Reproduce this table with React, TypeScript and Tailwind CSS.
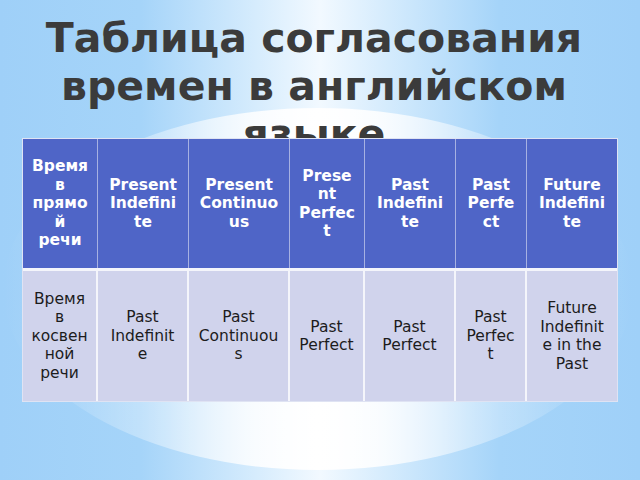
const cols = ["w-[75px]", "w-[91px]", "w-[101px]", "w-[75px]", "w-[91px]", "w-[71px]", "w-[90px]"];

const head: string[][] = [
  ["Время", "в", "прямо", "й", "речи"],
  ["Present", "Indefini", "te"],
  ["Present", "Continuo", "us"],
  ["Prese", "nt", "Perfec", "t"],
  ["Past", "Indefini", "te"],
  ["Past", "Perfe", "ct"],
  ["Future", "Indefini", "te"],
];

const body: string[][] = [
  ["Время", "в", "косвен", "ной", "речи"],
  ["Past", "Indefinit", "e"],
  ["Past", "Continuou", "s"],
  ["Past", "Perfect"],
  ["Past", "Perfect"],
  ["Past", "Perfec", "t"],
  ["Future", "Indefinit", "e in the", "Past"],
];

function Cell({ lines, w, last, header }: { lines: string[]; w: string; last: boolean; header: boolean }) {
  return (
    <div
      className={`${w} shrink-0 flex flex-col items-center justify-center text-center ${
        last ? "" : header ? "border-r border-[#a7b1e2]" : "border-r-2 border-[#f4f5fb]"
      } ${header ? "font-bold text-white" : "text-[#1c1c1c]"}`}
    >
      {lines.map((l, i) => (
        <span key={i} className="block whitespace-pre">
          {l}
        </span>
      ))}
    </div>
  );
}

export default function App() {
  return (
    <div className="relative w-[640px] h-[480px] overflow-hidden bg-[linear-gradient(90deg,#9fd0f8_0%,#a5d4f9_22%,#d6ecfd_40%,#f2f9ff_50%,#d6ecfd_60%,#a5d4f9_78%,#9fd0f8_100%)] font-['DejaVu_Sans',sans-serif]">
      {/* big light ellipse behind the table, edges fade into the background */}
      <div className="absolute left-[3px] top-[108px] w-[630px] h-[362px] rounded-[50%] bg-[linear-gradient(90deg,rgba(255,255,255,0)_0%,rgba(255,255,255,0.12)_12%,rgba(255,255,255,0.4)_26%,rgba(255,255,255,0.85)_40%,#ffffff_50%,rgba(255,255,255,0.85)_60%,rgba(255,255,255,0.4)_74%,rgba(255,255,255,0.12)_88%,rgba(255,255,255,0)_100%)]" />

      <div className="relative flex flex-col">
        <h1 className="h-[138px] pt-[14px] pl-[10px] pr-[22px] text-center text-[41px] leading-[48px] font-bold text-[#3b3b3b]">
          Таблица согласования времен в английском языке
        </h1>

        <div className="relative z-10 ml-[22px] w-[596px] border border-[#dfe3f3] text-[15.5px] leading-[18.5px]">
          <div className="flex h-[132px] bg-[#4f65c7] border-b-[3px] border-[#f4f5fb]">
            {head.map((lines, i) => (
              <Cell key={i} lines={lines} w={cols[i]} last={i === head.length - 1} header />
            ))}
          </div>
          <div className="flex h-[130px] bg-[#d0d3ec]">
            {body.map((lines, i) => (
              <Cell key={i} lines={lines} w={cols[i]} last={i === body.length - 1} header={false} />
            ))}
          </div>
        </div>
      </div>
    </div>
  );
}
